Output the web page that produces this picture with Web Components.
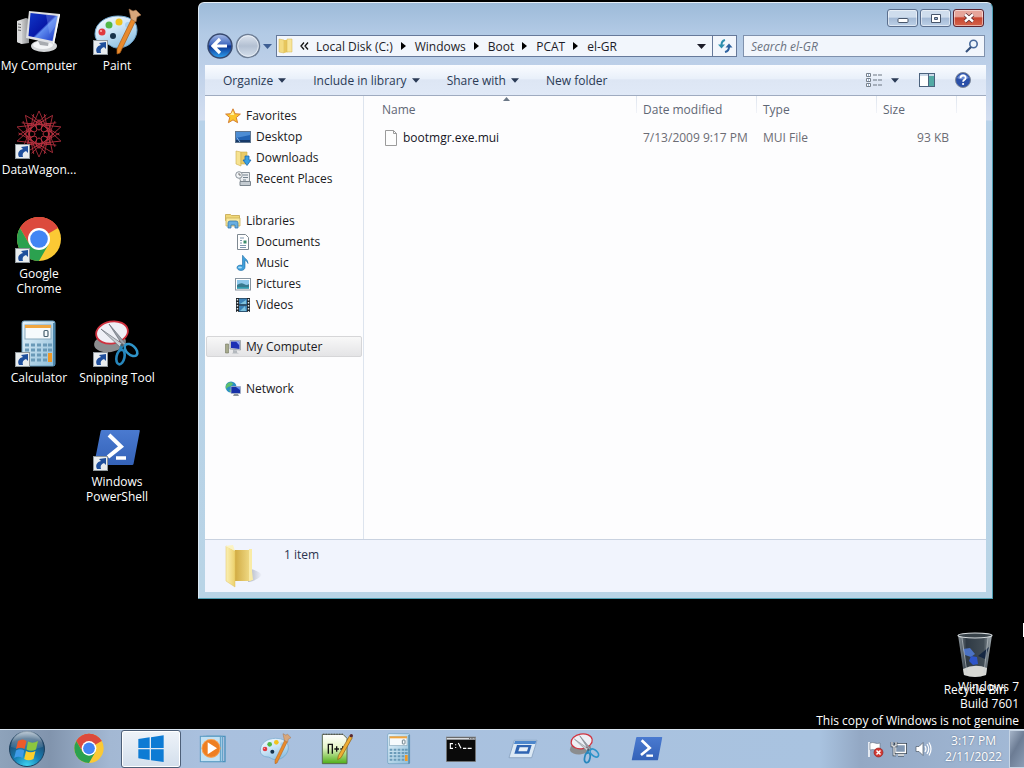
<!DOCTYPE html>
<html lang="en">
<head>
<meta charset="utf-8">
<title>Desktop</title>
<style>
  html, body { height: 100%; }
  body {
    margin: 0;
    background: #000;
    overflow: hidden;
    font: 12px/15px "Open Sans", "Noto Sans", sans-serif;
  }
</style>
</head>
<body>
<desktop-screen>
  <desktop-icon icon="computer" col="1" row="1">My Computer</desktop-icon>
  <desktop-icon icon="paint" col="2" row="1" shortcut>Paint</desktop-icon>
  <desktop-icon icon="rosette" col="1" row="2" shortcut>DataWagon...</desktop-icon>
  <desktop-icon icon="chrome" col="1" row="3" shortcut>Google<br>Chrome</desktop-icon>
  <desktop-icon icon="calc" col="1" row="4" shortcut>Calculator</desktop-icon>
  <desktop-icon icon="snip" col="2" row="4" shortcut>Snipping Tool</desktop-icon>
  <desktop-icon icon="powershell" col="2" row="5" shortcut>Windows<br>PowerShell</desktop-icon>

  <desktop-icon slot="bin" icon="bin">Recycle Bin</desktop-icon>
  <build-watermark slot="overlay"></build-watermark>

  <explorer-window slot="window">
    <address-bar slot="address"></address-bar>
    <command-bar slot="commands"></command-bar>
    <nav-pane slot="nav">
      <nav-item icon="star">Favorites</nav-item>
      <nav-item icon="desktop" nested>Desktop</nav-item>
      <nav-item icon="downloads" nested>Downloads</nav-item>
      <nav-item icon="recent" nested>Recent Places</nav-item>
      <nav-item icon="libraries" group>Libraries</nav-item>
      <nav-item icon="document" nested>Documents</nav-item>
      <nav-item icon="music" nested>Music</nav-item>
      <nav-item icon="picture" nested>Pictures</nav-item>
      <nav-item icon="video" nested>Videos</nav-item>
      <nav-item icon="pc" group selected>My Computer</nav-item>
      <nav-item icon="network" group>Network</nav-item>
    </nav-pane>
    <file-list slot="files"></file-list>
    <details-pane slot="details">1 item</details-pane>
  </explorer-window>

  <task-bar slot="taskbar">
    <task-button icon="chrome" label="Google Chrome"></task-button>
    <task-button icon="windows" label="Windows" active></task-button>
    <task-button icon="player" label="Media Player"></task-button>
    <task-button icon="paint" label="Paint"></task-button>
    <task-button icon="notepad" label="Notepad++"></task-button>
    <task-button icon="calc" label="Calculator"></task-button>
    <task-button icon="cmd" label="Command Prompt"></task-button>
    <task-button icon="run" label="Run"></task-button>
    <task-button icon="snip" label="Snipping Tool"></task-button>
    <task-button icon="powershell" label="PowerShell"></task-button>
  </task-bar>
</desktop-screen>

<script>
/* ---------- Icons ---------- */

// Repeats a shape around a centre point
function spin(shape, count, cx, cy) {
  let out = '';
  for (let i = 0; i < count; i++) {
    out += `<g transform="rotate(${i * 360 / count} ${cx} ${cy})">${shape}</g>`;
  }
  return out;
}

// name: [viewBox, markup]
const ICONS = {
  computer: ['0 0 48 48', `
    <defs>
      <linearGradient id="s" x1="0" y1="0" x2="1" y2="1"><stop offset="0" stop-color="#1038c8"/><stop offset=".5" stop-color="#0718a8"/><stop offset=".55" stop-color="#5f8cf0"/><stop offset="1" stop-color="#1430c0"/></linearGradient>
      <linearGradient id="t"><stop offset="0" stop-color="#f4f4f4"/><stop offset="1" stop-color="#8f9193"/></linearGradient>
    </defs>
    <path d="M2 13l9-3 3 1v24l-7 1-5-2z" fill="url(#t)"/>
    <path d="M2 13l5 1v22l-5-2z" fill="#d9dadb"/><path d="M3 16l3 .5M3 19l3 .5M3 22l3 .5" stroke="#666" stroke-width="1"/>
    <ellipse cx="29" cy="38" rx="13" ry="6" fill="#d4d6d8"/><ellipse cx="28" cy="37" rx="10" ry="4" fill="#f4f5f6"/>
    <path d="M22 31l12 2-1 5-8-1z" fill="#a9acb0"/>
    <path d="M14 3l31 3-6 30-28-6z" fill="#dfe1e4"/><path d="M44 6l1 1-6 29-1-1z" fill="#fff"/>
    <path d="M15.500 5l27 3-5 25-24-5z" fill="url(#s)"/>
    <path d="M31 6.700l11.500 1.300-2 10-6 8z" fill="#9db8ff" opacity=".3"/>`],
  paint: ['0 0 48 48', `
    <defs><linearGradient id="p" x1="0" y1="0" x2=".6" y2="1"><stop offset="0" stop-color="#f4faff"/><stop offset=".5" stop-color="#cfe6f7"/><stop offset="1" stop-color="#8fc2e4"/></linearGradient></defs>
    <path d="M2 26C2 15 13 8 25 8c10 0 19 4 19 14 0 9-8 18-19 18-6 0-7-3-11-4-5 0-12-2-12-10z" fill="url(#p)" stroke="#6fa5cc"/>
    <circle cx="9" cy="24" r="3.500" fill="#e0393f"/><circle cx="8" cy="23" r="1" fill="#ffb7b7"/>
    <circle cx="16" cy="17" r="3.500" fill="#52b848"/><circle cx="26" cy="14" r="3.500" fill="#f2c41d"/><circle cx="35" cy="17" r="3" fill="#a9d2ef"/>
    <circle cx="20" cy="28" r="3" fill="#16324c"/>
    <path d="M39 10l4 2-16 33-3 1 0-5z" fill="#e98a2c" stroke="#a95a14" stroke-width=".7"/>
    <path d="M36 1l4 2 3-1 5 5-4 2-1 5-5-3z" fill="#d9a77b" stroke="#9c6a42" stroke-width=".6"/>`],
  rosette: ['0 0 48 48', `<g fill="none" stroke="#b8313f" stroke-width="1">
    ${spin('<path d="M24 -1L40 35M24 -1L8 35" stroke-width=".8"/>', 10, 24, 22)}
    ${spin('<ellipse cx="24" cy="13" rx="3" ry="5"/>', 8, 24, 22)}
    <circle cx="24" cy="22" r="13" stroke-width=".6"/></g>
    <circle cx="24" cy="22" r="3" fill="#000"/>`],
  chrome: ['0 0 48 48', `
    <circle cx="24" cy="23" r="22" fill="#fbc934"/>
    <path d="M24 23L4.950 12A22 22 0 0 1 43.050 12z" fill="#dc4a3d"/>
    <path d="M24 12h19.050A22 22 0 0 0 4.950 12L14.500 28.500 24 23z" fill="#dc4a3d"/>
    <path d="M4.950 12A22 22 0 0 0 24 45l9.500-16.500L24 23l-9.500 5.500z" fill="#2ba14f"/>
    <circle cx="24" cy="23" r="11" fill="#fff"/><circle cx="24" cy="23" r="8.800" fill="#4285f4"/>`],
  calc: ['0 0 48 48', `
    <defs><linearGradient id="c" x1="0" y1="0" x2="1" y2="1"><stop offset="0" stop-color="#e8f5fc"/><stop offset="1" stop-color="#8dbcd8"/></linearGradient></defs>
    <rect x="7" y="1" width="33" height="45" rx="2" fill="url(#c)" stroke="#6b9dbd"/>
    <path d="M39 3v43" stroke="#4e87ab" stroke-width="2"/>
    <rect x="10" y="5" width="26" height="14" fill="#f6fafc" stroke="#89aabd"/><path d="M10 5h26v3H10z" fill="#f0a640"/>
    <rect x="29" y="10.500" width="4" height="6" rx="1" fill="none" stroke="#4b6370" stroke-width="1.200"/>
    <path d="M10 25h22M10 30h22M10 35h22M10 40h22" stroke="#6a9ab8" stroke-width="3" stroke-dasharray="4 2"/>
    <path d="M33 25h4M33 30h4" stroke="#6a9ab8" stroke-width="3"/><rect x="33" y="33" width="4" height="9" fill="#f09a28"/>`],
  snip: ['0 0 48 48', `
    <ellipse cx="17" cy="23" rx="16" ry="9" transform="rotate(-8 17 23)" fill="#8b8d8f"/>
    <ellipse cx="19" cy="12.500" rx="16" ry="11" transform="rotate(-10 19 12.500)" fill="#eef0f6" stroke="#d0323f" stroke-width="1.800"/>
    <path d="M16 4l14 22 3-2z" fill="#9aa0a8" stroke="#596069" stroke-width=".6"/><path d="M8 9l20 19 3-3z" fill="#c8cdd2" stroke="#596069" stroke-width=".6"/>
    <path d="M29 25l-2 6" stroke="#2487ba" stroke-width="3"/>
    <ellipse cx="27.500" cy="37" rx="4" ry="7.500" transform="rotate(12 27.500 37)" fill="none" stroke="#2787bd" stroke-width="2.600"/>
    <ellipse cx="38" cy="30" rx="4.500" ry="7.500" transform="rotate(-48 38 30)" fill="none" stroke="#2f95ca" stroke-width="2.600"/>
    <circle cx="29" cy="25" r="1.500" fill="#555c63"/>`],
  powershell: ['0 0 48 48', `
    <defs><linearGradient id="w" x1="0" y1="0" x2="0" y2="1"><stop offset="0" stop-color="#4a7ad0"/><stop offset="1" stop-color="#3462b8"/></linearGradient></defs>
    <path d="M9 6h37q1 0 .8 1L40.500 40q-.3 1-1.300 1H2q-1 0-.8-1L7.700 7Q8 6 9 6z" fill="url(#w)"/>
    <path d="M16 11l12 11.500L15 33" fill="none" stroke="#fff" stroke-width="4"/><path d="M23 34h10" stroke="#fff" stroke-width="3.500"/>`],
  bin: ['0 0 48 48', `
    <defs><linearGradient id="b"><stop offset="0" stop-color="#8e979d"/><stop offset=".25" stop-color="#2f3a44"/><stop offset=".75" stop-color="#414c55"/><stop offset="1" stop-color="#a9b2b7"/></linearGradient></defs>
    <path d="M7 3l6 40q11 4 22 0l6-40z" fill="url(#b)"/>
    <path d="M12 37q12-6 24-1l-1 7q-11 4-22 0z" fill="#d7d8d4"/>
    <path d="M12 17l7-1 5 6-4 3-6-2z" fill="#4c73c4"/><path d="M20 24l6 1 1 7-5 1-4-4z" fill="#2f55c8"/><path d="M27 24l11-9-4 12z" fill="#152742"/>
    <path d="M11 6l5 35M37 6l-4 35" stroke="#c9d0d4" stroke-width="1" opacity=".6"/>
    <ellipse cx="24" cy="3.500" rx="17" ry="2.500" fill="#39434a" stroke="#d5dadd" stroke-width="1.200"/>`],
  windows: ['0 0 48 48', `<path d="M5 9l17-2.500v16H5zM24 6.200L43 3.500v19H24zM5 24.500h17v16L5 38zM24 24.500h19v19l-19-2.700z" fill="#0d7bd4"/>`],
  player: ['0 0 48 48', `
    <path d="M14 5h28v38h-4" fill="none" stroke="#4d93bd" stroke-width="2"/>
    <rect x="10" y="5" width="28" height="38" fill="#a9d4ee" stroke="#5a9cc4" stroke-width="1.500"/>
    <rect x="5" y="5" width="30" height="38" fill="#c3e2f4" stroke="#5a9cc4" stroke-width="1.500"/>
    <circle cx="21" cy="23" r="14" fill="#ee7f22"/><circle cx="21" cy="23" r="13.500" fill="none" stroke="#f9b36f"/><path d="M16 14l14 9-14 9z" fill="#fff"/>`],
  notepad: ['0 0 48 48', `
    <defs><linearGradient id="n" x1="0" y1="0" x2="0" y2="1"><stop offset="0" stop-color="#fff"/><stop offset=".45" stop-color="#e6f5c8"/><stop offset="1" stop-color="#4eae16"/></linearGradient></defs>
    <path d="M2 2h31l6 6v38H2z" fill="url(#n)" stroke="#5a6a50" stroke-width="1.500"/>
    <path d="M3 2h30" stroke="#555" stroke-width="2" stroke-dasharray="2 2"/>
    <path d="M11 31V17h6v14M20 24h7M23.500 20v8M29 24h7M32.500 20v8" fill="none" stroke="#111" stroke-width="2"/>
    <path d="M43 4l4 3-17 30-5 3 1-6z" fill="#eeae32" stroke="#8a5a13"/><circle cx="45.500" cy="4" r="2.500" fill="#5a2a30"/>`],
  cmd: ['0 0 48 48', `
    <rect x="2" y="6" width="44" height="37" fill="#0a0a0a" stroke="#888"/><path d="M2.500 7h43v3h-43z" fill="#d7dade"/><path d="M36 8.500h2M39.500 8.500h2M43 8.500h1.500" stroke="#555" stroke-width="1.500"/>
    <path d="M12 16H8v7h4M16 17v1.500M16 21v1.500M20 15l4 8M27 23h5M34 23h6" fill="none" stroke="#fff" stroke-width="1.700"/>`],
  run: ['0 0 48 48', `
    <path d="M11 11h34l-8 26H3z" fill="#dce9f5" stroke="#7894b5"/>
    <path d="M12 12h32l-1.500 4.500h-32z" fill="#4c86cc"/><path d="M15 18h22l-4 13H11z" fill="#2f64b2"/><path d="M19 21.500h13l-2 6H17z" fill="#e8f0f8"/>`],

  shortcut: ['0 0 15 15', `<rect width="15" height="15" fill="#8f979c"/><rect x="1" y="1" width="13" height="13" fill="#e9edef"/>
    <path d="M4 13c-2-4 0-7 4-8L6 3l7-1v7l-2-2c-3 1-4 3-3 6z" fill="#1f4f9c"/>`],

  star: ['0 0 16 16', `<path d="M8 .8l2.100 4.900 5.300.4-4.100 3.400 1.300 5.200L8 11.900l-4.600 2.800 1.300-5.200L.6 6.100l5.300-.4z" fill="#fbc52c" stroke="#d0762a" stroke-width=".9"/><path d="M8 3l1.200 4L5 7z" fill="#fff0a0"/>`],
  desktop: ['0 0 16 16', `<rect x=".5" y="2.500" width="15" height="11" fill="#2364b4" stroke="#60768f"/><path d="M1 3h14v3L1 9z" fill="#4d8dd4"/><path d="M1 11h14v2H1z" fill="#163968"/><path d="M2 9l3 4" stroke="#8db8e8"/>`],
  folder: ['0 0 16 16', `<path d="M1 1l5 1v13l-5-1z" fill="#f3db82" stroke="#d5b44f" stroke-width=".5"/><path d="M6 2h4v12l-4 1z" fill="#e7c65d"/><path d="M9 1h5v13H9z" fill="#f7e59b" stroke="#d5b44f" stroke-width=".5"/>`],
  downloads: ['0 0 16 16', `<path d="M1 1l5 1v14l-5-2z" fill="#f6e291" stroke="#cfae4a" stroke-width=".6"/><path d="M6 2h6v12H6z" fill="#e9ca66" stroke="#cfae4a" stroke-width=".6"/><path d="M10 6h4v4h2l-4 5.500L8 10h2z" fill="#39a0e4" stroke="#1c68ac" stroke-width=".8"/>`],
  recent: ['0 0 16 16', `<path d="M5 1.500h9.500v11h-8l-1.500-4z" fill="#eaedf0" stroke="#8d959c"/><path d="M5 10.500h10.500v4H5z" fill="#c4cbd1" stroke="#7b858e"/><path d="M8 4h5M8 6.500h5M8 9h3" stroke="#74828e"/><circle cx="4" cy="4" r="3.300" fill="#f3f5f7" stroke="#8b949c"/><path d="M4 2v2h2" fill="none" stroke="#555" stroke-width=".8"/>`],
  libraries: ['0 0 16 16', `<path d="M.5 1.500h5l1 1h8v5H.5z" fill="#efd777" stroke="#c4a54b" stroke-width=".8"/><path d="M1 5h14v8H1z" fill="#f8e99f" stroke="#cbb058" stroke-width=".8"/><path d="M3 15V10q0-2 2-2h6q2 0 2 2v5h-3v-3H6v3z" fill="#67aee0" stroke="#3678ad" stroke-width=".8"/>`],
  document: ['0 0 16 16', `<path d="M2.500.5h8l3 3v12h-11z" fill="#fff" stroke="#7e8891"/><path d="M5 4h4M5 6.500h2M5 9h2M5 11.500h6M5 13.500h6" stroke="#6f8ba5" stroke-width=".9"/><path d="M8.500 6.500h3v3h-3z" fill="#3d8d6b"/>`],
  music: ['0 0 16 16', `<path d="M8 .5c1 3 5 3.500 5 8-1-2.500-2.500-3-3-3V12c0 2-1.500 3.500-4 3.500S2 14 2 12.500s2-3 5.500-2.200V.5z" fill="#3e9fdb" stroke="#1c6ba5" stroke-width=".6"/><ellipse cx="5" cy="12.500" rx="2" ry="1" fill="#a5dcf8"/>`],
  picture: ['0 0 16 16', `<rect x=".5" y="2.500" width="15" height="11.500" fill="#fff" stroke="#8794a0"/><path d="M2 4h12v8.500H2z" fill="#8cc7ea"/><path d="M2 9q4-3 7-1t5 0v4.500H2z" fill="#37798e"/><path d="M2 11h12v1.500H2z" fill="#2e9cae"/>`],
  video: ['0 0 16 16', `<path d="M1 1h14v14H1z" fill="#20262c"/><path d="M4 1.500h8v6H4zM4 8.500h8v6H4z" fill="#3c82b8"/><path d="M5 7l6-4v4zM5 14l5-5 1 5z" fill="#7ec1dd"/><path d="M2.500 2v13M13.500 2v13" stroke="#e3e8ec" stroke-width="1.400" stroke-dasharray="1.500 1.500"/>`],
  pc: ['0 0 16 16', `<path d="M.5 5h3v9h-3z" fill="#a7aa8c" stroke="#74775f" stroke-width=".6"/><path d="M5 1.500h10.500v9.500L5 10z" fill="#d6dade" stroke="#8b939b" stroke-width=".7"/><path d="M6 2.500h8.500v7.500L6 9z" fill="#1a2fb4"/><path d="M11 2.500h3.500v4z" fill="#8ba6f0"/><path d="M8 11l4 .5v2l2 1H7l1-1z" fill="#b4b9be"/>`],
  network: ['0 0 16 16', `<circle cx="6" cy="6" r="5.500" fill="#2c8fc4"/><path d="M3 2q4-2 5 1-2 3-5 3l-2 2Q0 4 3 2zM4 9l4-1v3q-3 1-4-2z" fill="#5fc06c"/><path d="M6 5.500h9.500v7H6z" fill="#1731a8" stroke="#a8b3c4" stroke-width=".8"/><path d="M11 6h4v3z" fill="#6d93ee"/><path d="M9 13h4l1 2H8z" fill="#8c949c"/>`],
  file: ['0 0 16 16', `<path d="M2.500.5h8l3 3v12h-11z" fill="#fdfdfd" stroke="#9b9b9b"/><path d="M10.500.5v3h3" fill="none" stroke="#9b9b9b"/>`],
  bigfolder: ['0 0 40 44', `
    <defs><linearGradient id="f"><stop offset="0" stop-color="#fbf0b4"/><stop offset="1" stop-color="#ecd06a"/></linearGradient>
    <linearGradient id="g"><stop offset="0" stop-color="#cfa83e"/><stop offset="1" stop-color="#f2dd8a"/></linearGradient>
    <linearGradient id="d"><stop offset="0" stop-color="#8e95a4" stop-opacity=".7"/><stop offset="1" stop-color="#8e95a4" stop-opacity="0"/></linearGradient></defs>
    <path d="M27 25q8 2 11 6-5 6-14 7z" fill="url(#d)"/>
    <path d="M10 6h17v31H10z" fill="url(#g)"/><path d="M25 5h3v22l1 9-4 1z" fill="#f9eba6"/>
    <path d="M2 2l9 5v36l-9-6z" fill="url(#f)" stroke="#e0c25c" stroke-width=".5"/><path d="M1 2l8-1 2 6z" fill="#fbf3c4"/>`],

  back: ['0 0 28 28', `
    <defs>
      <linearGradient id="a" x1="0" y1="0" x2="0" y2="1"><stop offset="0" stop-color="#a8bce8"/><stop offset=".45" stop-color="#3f67be"/><stop offset=".5" stop-color="#0c3190"/><stop offset="1" stop-color="#2fa2f0"/></linearGradient>
    </defs>
    <circle cx="14" cy="14" r="12" fill="url(#a)" stroke="#37496f" stroke-width="1.500"/>
    <path d="M14 7l-7 7 7 7M8 14h13" fill="none" stroke="#fff" stroke-width="3.200"/>`],
  forward: ['0 0 28 28', `
    <defs><linearGradient id="q" x1="0" y1="0" x2="0" y2="1"><stop offset="0" stop-color="#dfe6f0"/><stop offset=".5" stop-color="#b3c0d2"/><stop offset="1" stop-color="#d6e1ee"/></linearGradient></defs>
    <circle cx="14" cy="14" r="11.500" fill="url(#q)" stroke="#6d7d94" stroke-width="1.500"/><circle cx="14" cy="14" r="10.300" fill="none" stroke="#eef3f9" stroke-width=".8"/>`],
  down: ['0 0 9 5', `<path d="M0 0h9L4.500 5z" fill="currentColor"/>`],
  right: ['0 0 5 8', `<path d="M0 0v8l5-4z" fill="#000"/>`],
  up: ['0 0 7 4', `<path d="M0 4L3.500 0 7 4z" fill="#6b7887"/>`],
  chevrons: ['0 0 9 8', `<path d="M4 .5L1 4l3 3.500M8 .5L5 4l3 3.500" fill="none" stroke="#111" stroke-width="1.300"/>`],
  refresh: ['0 0 16 16', `<path d="M8 2Q4.500 3 4.500 7" fill="none" stroke="#2e8fae" stroke-width="2"/><path d="M1 6.500h7L4.500 10.500z" fill="#2e8fae"/><path d="M8 14q4-1 4-5" fill="none" stroke="#2d62a0" stroke-width="2"/><path d="M8.500 9.500h7L12 5.500z" fill="#2d62a0"/>`],
  search: ['0 0 14 14', `<circle cx="8.500" cy="5" r="3.700" fill="#eef5fc" stroke="#47699c" stroke-width="1.600"/><path d="M6 8l-5 5" stroke="#34507c" stroke-width="2.200"/>`],
  view: ['0 0 16 14', `<path d="M.5.500h4v3h-4zM.5 5.500h4v3h-4zM.5 10.500h4v3h-4z" fill="#fff" stroke="#76808c"/><path d="M2 2h1M2 7h1M2 12h1" stroke="#3f72b0"/><path d="M7 2h4M12 2h4M7 7h4M12 7h4M7 12h4M12 12h4" stroke="#6d7681" stroke-width="1.200"/>`],
  preview: ['0 0 16 14', `<rect x=".5" y=".5" width="15" height="13" fill="#fff" stroke="#4b627d"/><path d="M1 1h14v2H1z" fill="#cbd9e8"/><path d="M10 3h5v10h-5z" fill="#52a9a4"/><path d="M9.500 1v12" stroke="#4b627d"/>`],
  help: ['0 0 16 16', `<circle cx="8" cy="8" r="7.500" fill="#2a4fa8" stroke="#7c8798"/><path d="M2 6q6-8 12 0-6 3-12 0z" fill="#6c8cd4"/><path d="M5.500 6.200q0-2.700 2.600-2.700t2.500 2.400q0 1.300-1.300 2T8.100 9.800" fill="none" stroke="#fff" stroke-width="1.800"/><circle cx="8.100" cy="12" r="1.100" fill="#fff"/>`],
  minimize: ['0 0 12 12', `<rect x="1" y="6.500" width="10" height="4" rx="1" fill="#fff" stroke="#48566b"/>`],
  maximize: ['0 0 12 12', `<path d="M1.500 2.500h9v8h-9z" fill="#fff" stroke="#48566b"/><path d="M4.500 5.500h3v2h-3z" fill="#9bb2cf" stroke="#48566b"/>`],
  close: ['0 0 12 12', `<path d="M2 2.500l8 7M10 2.500l-8 7" stroke="#5a2b30" stroke-width="4"/><path d="M2 2.500l8 7M10 2.500l-8 7" stroke="#fff" stroke-width="2.400"/>`],
  orb: ['0 0 38 38', `
    <defs>
      <radialGradient id="o" cx=".5" cy="1" r="1"><stop offset="0" stop-color="#3fd8f4"/><stop offset=".4" stop-color="#167fb4"/><stop offset=".8" stop-color="#1f4a70"/><stop offset="1" stop-color="#6e8ca6"/></radialGradient>
      <linearGradient id="h" x1="0" y1="0" x2="0" y2="1"><stop offset="0" stop-color="#fff" stop-opacity=".55"/><stop offset="1" stop-color="#fff" stop-opacity=".05"/></linearGradient>
    </defs>
    <circle cx="19" cy="19" r="17.500" fill="url(#o)" stroke="#1d405e"/>
    <path d="M3 17a16 16 0 0 1 32 0q-16 5-32 0z" fill="url(#h)"/>
    <path d="M10 11q5-3 8.500 0l-2 8q-4-2.500-8.500 0z" fill="#ee5a2a"/><path d="M20 11.500q4.500 2.500 10-.5l-2 8.500q-5 2.500-9.500 0z" fill="#8cc63f"/>
    <path d="M8 20.500q4-2.500 8.300 0L14.500 28q-4-2.500-8.300 0z" fill="#3f9be8"/><path d="M18 21q4.500 2.500 9.500 0l-2 8q-5 2.500-9.300 0z" fill="#fccf2c"/>`],
  flag: ['0 0 18 18', `<path d="M3 2v15" stroke="#fff" stroke-width="1.500"/><path d="M4 3q3-1 5 0t5 0v7q-3 1-5 0t-5 0z" fill="#fff" stroke="#55606c" stroke-width=".5"/><circle cx="12.500" cy="12.500" r="4.500" fill="#d23a34" stroke="#8d1d1c" stroke-width=".6"/><path d="M10.500 10.500l4 4M14.500 10.500l-4 4" stroke="#fff" stroke-width="1.500"/>`],
  lan: ['0 0 18 18', `<path d="M5.500 4.500h10v8h-10zM8 15h6" fill="#8ba0bc" stroke="#33404f" stroke-width="3"/><path d="M5.500 4.500h10v8h-10zM8 15h6" fill="#8197b2" stroke="#fff" stroke-width="1.400"/><path d="M2 2v4h4V2M4 6v9h2" fill="none" stroke="#33404f" stroke-width="2.600"/><path d="M2 2v4h4V2M4 6v9h2" fill="none" stroke="#fff" stroke-width="1.200"/>`],
  volume: ['0 0 18 18', `<path d="M2 6.500h3l4-4v13l-4-4H2z" fill="#fff" stroke="#4d5a69" stroke-width=".7"/><path d="M11 6q2 3 0 6M13 4q3.500 5 0 10M15 2.500q4 6.500 0 13" fill="none" stroke="#fff" stroke-width="1.200"/>`]
};

// Writes each element's template into an open shadow root
class BaseElement extends HTMLElement {
  constructor() {
    super();
    this.attachShadow({ mode: 'open' });
  }

  connectedCallback() {
    this.shadowRoot.innerHTML = this.template();
  }
}

class AppIcon extends BaseElement {
  template() {
    const [box, markup] = ICONS[this.getAttribute('name')];
    return `
      <style>
        :host { display: block; flex: none; width: 16px; height: 16px; }
        svg { display: block; width: 100%; height: 100%; overflow: visible; }
      </style>
      <svg viewBox="${box}" aria-hidden="true">${markup}</svg>`;
  }
}

/* ---------- Desktop ---------- */

class DesktopScreen extends BaseElement {
  template() {
    return `
      <style>
        :host { display: flex; flex-direction: column; height: 100vh; }
        .area { position: relative; flex: 1; min-height: 0; background: #000; }
        .icons {
          display: grid;
          grid-template-columns: 78px 78px;
          grid-auto-rows: 104px;
          padding-top: 8px;
        }
        ::slotted([slot="window"]) { position: absolute; top: 2px; left: 198px; right: 31px; bottom: 130px; }
        ::slotted([slot="bin"]) { position: absolute; right: 10px; bottom: 19px; width: 78px; height: 78px; }
        ::slotted([slot="overlay"]) { position: absolute; right: 5px; bottom: 0; }
        .caret { position: absolute; right: 0; bottom: 92px; width: 1px; height: 14px; background: #fff; }
      </style>
      <div class="area">
        <div class="icons"><slot></slot></div>
        <slot name="bin"></slot>
        <slot name="overlay"></slot>
        <slot name="window"></slot>
        <span class="caret"></span>
      </div>
      <slot name="taskbar"></slot>`;
  }
}

class DesktopIcon extends BaseElement {
  template() {
    const col = this.getAttribute('col');
    const row = this.getAttribute('row');
    const overlay = this.hasAttribute('shortcut') ? '<app-icon class="link" name="shortcut"></app-icon>' : '';
    return `
      <style>
        :host { display: block; ${col ? `grid-area: ${row} / ${col};` : ''} }
        button {
          display: flex;
          flex-direction: column;
          align-items: center;
          gap: 2px;
          width: 100%;
          padding: 0;
          border: 0;
          background: none;
          color: #fff;
          font: inherit;
          text-shadow: 0 1px 2px #000;
        }
        .image { position: relative; }
        .image app-icon { width: 48px; height: 48px; }
        .image .link { position: absolute; left: 0; bottom: 1px; width: 15px; height: 15px; }
        .label { white-space: nowrap; }
      </style>
      <button type="button">
        <span class="image"><app-icon name="${this.getAttribute('icon')}"></app-icon>${overlay}</span>
        <span class="label"><slot></slot></span>
      </button>`;
  }
}

class BuildWatermark extends BaseElement {
  template() {
    return `
      <style>
        :host { display: block; color: #fff; text-align: right; line-height: 17px; }
      </style>
      <div>Windows 7</div>
      <div>Build 7601</div>
      <div>This copy of Windows is not genuine</div>`;
  }
}

/* ---------- Explorer ---------- */

class ExplorerWindow extends BaseElement {
  template() {
    return `
      <style>
        :host {
          display: flex;
          flex-direction: column;
          box-sizing: border-box;
          padding: 6px 6px 6px;
          border: 1px solid #4d9cb0;
          border-top-color: #e6eef6;
          border-left-color: #dce9f4;
          border-radius: 6px 6px 1px 1px;
          background: linear-gradient(#9dbbd9, #b2cae5 30px, #bccfe8 60px, #d3def0 117px, #b8d2e9 118px, #b9d4e6);
        }
        .caption { display: flex; justify-content: flex-end; gap: 2px; padding-right: 2px; }
        .caption button {
          display: grid;
          place-items: center;
          width: 31px;
          height: 18px;
          padding: 0;
          border: 1px solid #5b6f8e;
          border-radius: 3px;
          background: linear-gradient(#cfdded 45%, #a3b9d5 50%, #bdd1e8);
          box-shadow: inset 0 0 0 1px #ffffff80;
        }
        .caption .close { border-color: #5c2431; background: linear-gradient(#e6a59a 40%, #c8452f 50%, #d4644c); }
        .caption app-icon { width: 12px; height: 12px; }
        .client { display: flex; flex: 1; flex-direction: column; min-height: 0; margin-top: 8px; background: #fdfdfe; }
        .body { display: flex; flex: 1; min-height: 0; }
        ::slotted([slot="files"]) { flex: 1; min-width: 0; }
      </style>
      <div class="caption">
        <button type="button" aria-label="Minimize"><app-icon name="minimize"></app-icon></button>
        <button type="button" aria-label="Maximize"><app-icon name="maximize"></app-icon></button>
        <button type="button" class="close" aria-label="Close"><app-icon name="close"></app-icon></button>
      </div>
      <slot name="address"></slot>
      <div class="client">
        <slot name="commands"></slot>
        <div class="body"><slot name="nav"></slot><slot name="files"></slot></div>
        <slot name="details"></slot>
      </div>`;
  }
}

class AddressBar extends BaseElement {
  template() {
    const crumbs = ['Local Disk (C:)', 'Windows', 'Boot', 'PCAT', 'el-GR'];
    const path = crumbs
      .map(name => `<button type="button">${name}</button>`)
      .join('<app-icon class="sep" name="right"></app-icon>');
    return `
      <style>
        :host { display: flex; align-items: center; height: 22px; margin-top: 8px; padding-right: 1px; color: #1c1c28; }
        button { padding: 0; border: 0; background: none; color: inherit; font: inherit; }
        .round { flex: none; width: 28px; height: 28px; margin-left: 1px; }
        .round.next { margin-left: 0; }
        .round app-icon { width: 28px; height: 28px; }
        .recent { color: #3e5f94; padding: 0 4px 0 1px; }
        .arrow { width: 9px; height: 5px; }
        .path {
          display: flex;
          flex: 1;
          align-items: center;
          box-sizing: border-box;
          height: 22px;
          padding-left: 1px;
          border: 1px solid #66799a;
          background: #f2f6fc;
        }
        .path .chevrons { width: 9px; height: 8px; margin: 0 7px 0 6px; }
        .path .sep { width: 5px; height: 8px; margin: 0 9px 0 8px; }
        .path .drop { margin-left: auto; padding-right: 6px; }
        .path .refresh { display: grid; place-items: center; align-self: stretch; width: 24px; border-left: 1px solid #66799a; }
        label {
          display: flex;
          flex: 0 1 242px;
          align-items: center;
          box-sizing: border-box;
          height: 22px;
          margin-left: 6px;
          padding: 0 5px 0 7px;
          border: 1px solid #7f91ad;
          background: #f2f6fc;
        }
        input { flex: 1; min-width: 0; padding: 0; border: 0; outline: 0; background: none; font: italic 12px "Open Sans", "Noto Sans", sans-serif; }
        input::placeholder { color: #6b7280; opacity: 1; }
        label app-icon { width: 14px; height: 14px; }
      </style>
      <button type="button" class="round" aria-label="Back"><app-icon name="back"></app-icon></button>
      <button type="button" class="round next" aria-label="Forward"><app-icon name="forward"></app-icon></button>
      <button type="button" class="recent" aria-label="Recent pages"><app-icon class="arrow" name="down"></app-icon></button>
      <div class="path">
        <app-icon name="folder"></app-icon>
        <app-icon class="chevrons" name="chevrons"></app-icon>
        ${path}
        <button type="button" class="drop" aria-label="Previous locations"><app-icon class="arrow" name="down"></app-icon></button>
        <button type="button" class="refresh" aria-label="Refresh"><app-icon name="refresh"></app-icon></button>
      </div>
      <label><input type="text" placeholder="Search el-GR" aria-label="Search el-GR"><app-icon name="search"></app-icon></label>`;
  }
}

class CommandBar extends BaseElement {
  template() {
    const arrow = '<app-icon class="arrow" name="down"></app-icon>';
    return `
      <style>
        :host {
          display: flex;
          align-items: center;
          gap: 27px;
          height: 30px;
          padding: 0 15px 0 18px;
          border-bottom: 1px solid #9fabc0;
          background: linear-gradient(#fafcff, #e9f0fa 45%, #dde6f4 50%, #e0e9f7);
          color: #2a3a55;
        }
        button { display: flex; align-items: center; gap: 5px; padding: 0; border: 0; background: none; color: inherit; font: inherit; }
        .arrow { width: 8px; height: 5px; }
        .tools { display: flex; align-items: center; gap: 20px; margin-left: auto; }
        .views { gap: 9px; }
        .wide { width: 16px; height: 14px; }
      </style>
      <button type="button">Organize ${arrow}</button>
      <button type="button">Include in library ${arrow}</button>
      <button type="button">Share with ${arrow}</button>
      <button type="button">New folder</button>
      <div class="tools">
        <button type="button" class="views" aria-label="Change your view"><app-icon class="wide" name="view"></app-icon>${arrow}</button>
        <button type="button" aria-label="Preview pane"><app-icon class="wide" name="preview"></app-icon></button>
        <button type="button" aria-label="Help"><app-icon name="help"></app-icon></button>
      </div>`;
  }
}

class NavPane extends BaseElement {
  template() {
    return `
      <style>
        :host { display: block; box-sizing: border-box; width: 159px; padding: 9px 1px 0; border-right: 1px solid #dde4ee; }
      </style>
      <nav aria-label="Folders"><slot></slot></nav>`;
  }
}

class NavItem extends BaseElement {
  template() {
    return `
      <style>
        :host { display: block; }
        :host([group]) { margin-top: 21px; }
        a {
          display: flex;
          align-items: center;
          gap: 5px;
          box-sizing: border-box;
          height: 21px;
          padding-left: 18px;
          border: 1px solid transparent;
          border-radius: 2px;
          color: #1a1a22;
          text-decoration: none;
        }
        :host([nested]) a { padding-left: 28px; }
        :host([selected]) a { border-color: #d6d6d8; background: linear-gradient(#f8f8f8, #e4e4e6); }
      </style>
      <a href="#"><app-icon name="${this.getAttribute('icon')}"></app-icon><slot></slot></a>`;
  }
}

class FileList extends BaseElement {
  template() {
    return `
      <style>
        :host { display: block; padding-left: 12px; }
        table { width: 100%; table-layout: fixed; border-collapse: separate; border-spacing: 0; color: #6c6c74; }
        .name { width: 261px; }
        .mid { width: 120px; }
        .size { width: 80px; }
        th {
          position: relative;
          box-sizing: border-box;
          height: 26px;
          padding: 0 6px;
          background: linear-gradient(#dde4ee, #f1f3f8) right top / 1px 17px no-repeat;
          color: #5f6775;
          font-weight: 400;
          text-align: left;
        }
        th:last-child { background: none; }
        th app-icon { position: absolute; top: 1px; left: calc(50% - 4px); width: 7px; height: 4px; }
        td { height: 21px; padding: 5px 6px 0; }
        .file { display: flex; align-items: center; gap: 4px; padding-left: 1px; color: #16161e; }
        .num { padding-right: 8px; text-align: right; }
      </style>
      <table>
        <colgroup><col class="name"><col class="mid"><col class="mid"><col class="size"><col></colgroup>
        <thead>
          <tr><th>Name<app-icon name="up"></app-icon></th><th>Date modified</th><th>Type</th><th>Size</th><th></th></tr>
        </thead>
        <tbody>
          <tr>
            <td><span class="file"><app-icon name="file"></app-icon>bootmgr.exe.mui</span></td>
            <td>7/13/2009 9:17 PM</td>
            <td>MUI File</td>
            <td class="num">93 KB</td>
            <td></td>
          </tr>
        </tbody>
      </table>`;
  }
}

class DetailsPane extends BaseElement {
  template() {
    return `
      <style>
        :host {
          display: flex;
          gap: 20px;
          box-sizing: border-box;
          height: 53px;
          padding: 4px 19px;
          border-top: 1px solid #c9d2e0;
          background: #f1f4fd;
          color: #2c3450;
        }
        app-icon { width: 40px; height: 44px; }
        span { padding-top: 3px; }
      </style>
      <app-icon name="bigfolder"></app-icon>
      <span><slot></slot></span>`;
  }
}

/* ---------- Taskbar ---------- */

class TaskBar extends BaseElement {
  template() {
    return `
      <style>
        :host {
          display: flex;
          height: 38px;
          border-top: 1px solid #dbe6f1;
          background: linear-gradient(90deg, #8ea3bb, #8194ad 50px, #a3b8d3 110px, #a9c0de 200px, #a9c3e0 80%, #93a8c4 84%, #a3bad7);
        }
        .start { display: flex; width: 59px; padding: 0 0 0 8px; border: 0; background: none; }
        .start app-icon { width: 38px; height: 38px; }
        .buttons { display: flex; gap: 2px; }
        .tray { display: flex; align-items: center; gap: 6px; margin-left: auto; color: #fff; }
        .tray app-icon { width: 18px; height: 18px; }
        .clock { width: 71px; line-height: 16px; text-align: center; text-shadow: 0 0 2px #5a6c84; }
        .peek { align-self: stretch; width: 15px; padding: 0; border: 1px solid #c6d4e4; border-right: 0; background: linear-gradient(120deg, #a5b4c8, #6c7c94 45%, #8b9db5); }
        .end { display: flex; align-self: stretch; align-items: center; }
      </style>
      <button type="button" class="start" aria-label="Start"><app-icon name="orb"></app-icon></button>
      <div class="buttons"><slot></slot></div>
      <div class="tray">
        <app-icon name="flag"></app-icon>
        <app-icon name="lan"></app-icon>
        <app-icon name="volume"></app-icon>
        <div class="end">
          <time class="clock">3:17 PM<br>2/11/2022</time>
          <button type="button" class="peek" aria-label="Show desktop"></button>
        </div>
      </div>`;
  }
}

class TaskButton extends BaseElement {
  template() {
    return `
      <style>
        :host { display: block; width: 60px; }
        button {
          display: grid;
          place-items: center;
          box-sizing: border-box;
          width: 100%;
          height: 100%;
          padding: 0;
          border: 1px solid transparent;
          border-radius: 3px;
          background: none;
        }
        :host([active]) button { border-color: #4d5f78; background: linear-gradient(#eef3f9, #d3dfec); box-shadow: inset 0 0 0 1px #fff; }
        app-icon { width: 32px; height: 32px; }
      </style>
      <button type="button" aria-label="${this.getAttribute('label')}"><app-icon name="${this.getAttribute('icon')}"></app-icon></button>`;
  }
}

customElements.define('app-icon', AppIcon);
customElements.define('desktop-screen', DesktopScreen);
customElements.define('desktop-icon', DesktopIcon);
customElements.define('build-watermark', BuildWatermark);
customElements.define('explorer-window', ExplorerWindow);
customElements.define('address-bar', AddressBar);
customElements.define('command-bar', CommandBar);
customElements.define('nav-pane', NavPane);
customElements.define('nav-item', NavItem);
customElements.define('file-list', FileList);
customElements.define('details-pane', DetailsPane);
customElements.define('task-bar', TaskBar);
customElements.define('task-button', TaskButton);
</script>
</body>
</html>
